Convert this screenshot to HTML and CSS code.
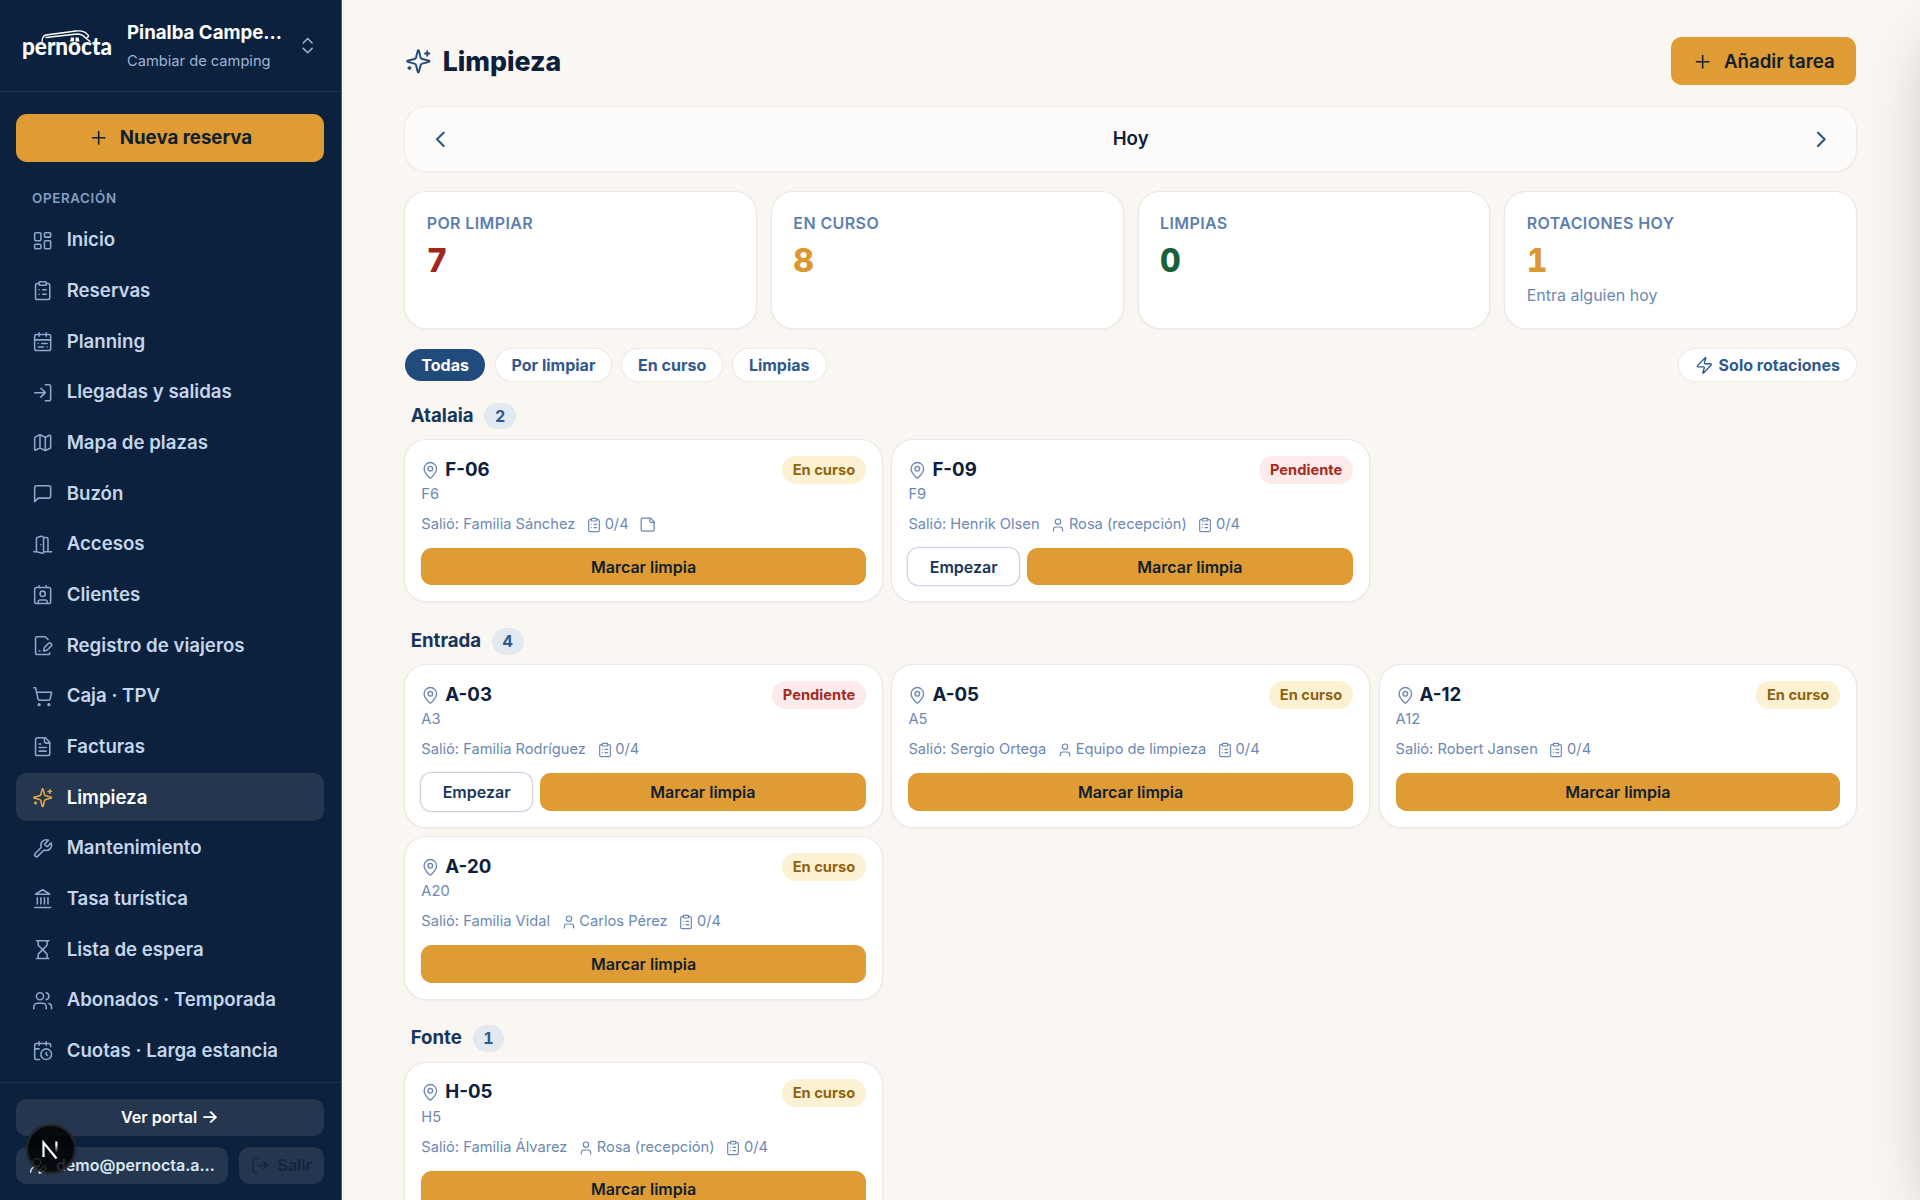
FILE: index.html
```html
<!DOCTYPE html>
<html lang="es">
<head>
    <meta charset="UTF-8">
    <meta name="viewport" content="width=device-width, initial-scale=1.0">
    <title>Limpieza · Pernocta</title>
    <link rel="stylesheet" href="styles.css">
</head>
<body>

<svg class="sprite" aria-hidden="true">
    <symbol id="i-plus" viewBox="0 0 24 24"><path d="M5 12h14M12 5v14"/></symbol>
    <symbol id="i-updown" viewBox="0 0 24 24"><path d="m7 15 5 5 5-5M7 9l5-5 5 5"/></symbol>
    <symbol id="i-left" viewBox="0 0 24 24"><path d="m15 18-6-6 6-6"/></symbol>
    <symbol id="i-right" viewBox="0 0 24 24"><path d="m9 18 6-6-6-6"/></symbol>
    <symbol id="i-dashboard" viewBox="0 0 24 24"><rect width="7" height="9" x="3" y="3" rx="1"/><rect width="7" height="5" x="14" y="3" rx="1"/><rect width="7" height="9" x="14" y="12" rx="1"/><rect width="7" height="5" x="3" y="16" rx="1"/></symbol>
    <symbol id="i-clipboard" viewBox="0 0 24 24"><rect width="8" height="4" x="8" y="2" rx="1"/><path d="M16 4h2a2 2 0 0 1 2 2v14a2 2 0 0 1-2 2H6a2 2 0 0 1-2-2V6a2 2 0 0 1 2-2h2M12 11h4M12 16h4M8 11h.01M8 16h.01"/></symbol>
    <symbol id="i-calendar" viewBox="0 0 24 24"><rect width="18" height="18" x="3" y="4" rx="2"/><path d="M16 2v4M3 10h18M8 2v4M17 14h-6M13 18H7M7 14h.01M17 18h.01"/></symbol>
    <symbol id="i-login" viewBox="0 0 24 24"><path d="M15 3h4a2 2 0 0 1 2 2v14a2 2 0 0 1-2 2h-4M10 17l5-5-5-5M15 12H3"/></symbol>
    <symbol id="i-map" viewBox="0 0 24 24"><path d="M14.106 5.553a2 2 0 0 0 1.788 0l3.659-1.83A1 1 0 0 1 21 4.619v12.764a1 1 0 0 1-.553.894l-4.553 2.277a2 2 0 0 1-1.788 0l-4.212-2.106a2 2 0 0 0-1.788 0l-3.659 1.83A1 1 0 0 1 3 19.381V6.618a1 1 0 0 1 .553-.894l4.553-2.277a2 2 0 0 1 1.788 0zM15 5.764v15M9 3.236v15"/></symbol>
    <symbol id="i-message" viewBox="0 0 24 24"><path d="M21 15a2 2 0 0 1-2 2H7l-4 4V5a2 2 0 0 1 2-2h14a2 2 0 0 1 2 2z"/></symbol>
    <symbol id="i-door" viewBox="0 0 24 24"><path d="M13 4h3a2 2 0 0 1 2 2v14M2 20h3M13 20h9M10 12v.01M13 4.562v16.157a1 1 0 0 1-1.242.97L5 20V5.562a2 2 0 0 1 1.515-1.94l4-1A2 2 0 0 1 13 4.561Z"/></symbol>
    <symbol id="i-contact" viewBox="0 0 24 24"><path d="M16 2v2M7 22v-2a2 2 0 0 1 2-2h6a2 2 0 0 1 2 2v2M8 2v2"/><circle cx="12" cy="11" r="3"/><rect x="3" y="4" width="18" height="18" rx="2"/></symbol>
    <symbol id="i-filepen" viewBox="0 0 24 24"><path d="m18 5-2.414-2.414A2 2 0 0 0 14.172 2H6a2 2 0 0 0-2 2v16a2 2 0 0 0 2 2h12a2 2 0 0 0 2-2"/><path d="M21.378 12.626a1 1 0 0 0-3.004-3.004l-4.01 4.012a2 2 0 0 0-.506.854l-.837 2.87a.5.5 0 0 0 .62.62l2.87-.837a2 2 0 0 0 .854-.506z"/><path d="M8 18h1"/></symbol>
    <symbol id="i-cart" viewBox="0 0 24 24"><circle cx="8" cy="21" r="1"/><circle cx="19" cy="21" r="1"/><path d="M2.05 2.05h2l2.66 12.42a2 2 0 0 0 2 1.58h9.78a2 2 0 0 0 1.95-1.57l1.65-7.43H5.12"/></symbol>
    <symbol id="i-file" viewBox="0 0 24 24"><path d="M15 2H6a2 2 0 0 0-2 2v16a2 2 0 0 0 2 2h12a2 2 0 0 0 2-2V7Z"/><path d="M14 2v4a2 2 0 0 0 2 2h4M10 9H8M16 13H8M16 17H8"/></symbol>
    <symbol id="i-sparkles" viewBox="0 0 24 24"><path d="M9.937 15.5A2 2 0 0 0 8.5 14.063l-6.135-1.582a.5.5 0 0 1 0-.962L8.5 9.936A2 2 0 0 0 9.937 8.5l1.582-6.135a.5.5 0 0 1 .963 0L14.063 8.5A2 2 0 0 0 15.5 9.937l6.135 1.581a.5.5 0 0 1 0 .964L15.5 14.063a2 2 0 0 0-1.437 1.437l-1.582 6.135a.5.5 0 0 1-.963 0z"/><path d="M20 3v4M22 5h-4M4 17v2M5 18H3"/></symbol>
    <symbol id="i-wrench" viewBox="0 0 24 24"><path d="M14.7 6.3a1 1 0 0 0 0 1.4l1.6 1.6a1 1 0 0 0 1.4 0l3.77-3.77a6 6 0 0 1-7.94 7.94l-6.91 6.91a2.12 2.12 0 0 1-3-3l6.91-6.91a6 6 0 0 1 7.94-7.94l-3.76 3.76z"/></symbol>
    <symbol id="i-landmark" viewBox="0 0 24 24"><path d="M3 22h18M6 18v-7M10 18v-7M14 18v-7M18 18v-7M12 2l8 5H4z"/></symbol>
    <symbol id="i-hourglass" viewBox="0 0 24 24"><path d="M5 22h14M5 2h14M17 22v-4.172a2 2 0 0 0-.586-1.414L12 12l-4.414 4.414A2 2 0 0 0 7 17.828V22M7 2v4.172a2 2 0 0 0 .586 1.414L12 12l4.414-4.414A2 2 0 0 0 17 6.172V2"/></symbol>
    <symbol id="i-users" viewBox="0 0 24 24"><path d="M16 21v-2a4 4 0 0 0-4-4H6a4 4 0 0 0-4 4v2M22 21v-2a4 4 0 0 0-3-3.870M16 3.130a4 4 0 0 1 0 7.750"/><circle cx="9" cy="7" r="4"/></symbol>
    <symbol id="i-calclock" viewBox="0 0 24 24"><path d="M21 7.5V6a2 2 0 0 0-2-2H5a2 2 0 0 0-2 2v14a2 2 0 0 0 2 2h3.500M16 2v4M8 2v4M3 10h5M17.5 17.5 16 16.3V14"/><circle cx="16" cy="16" r="6"/></symbol>
    <symbol id="i-userpen" viewBox="0 0 24 24"><path d="M2 21a8 8 0 0 1 10.821-7.487M21.378 16.626a1 1 0 0 0-3.004-3.004l-4.01 4.012a2 2 0 0 0-.506.854l-.837 2.87a.5.5 0 0 0 .62.62l2.87-.837a2 2 0 0 0 .854-.506z"/><circle cx="10" cy="8" r="5"/></symbol>
    <symbol id="i-logout" viewBox="0 0 24 24"><path d="M9 21H5a2 2 0 0 1-2-2V5a2 2 0 0 1 2-2h4M16 17l5-5-5-5M21 12H9"/></symbol>
    <symbol id="i-zap" viewBox="0 0 24 24"><path d="M4 14a1 1 0 0 1-.78-1.63l9.9-10.2a.5.5 0 0 1 .86.46l-1.92 6.02A1 1 0 0 0 13 10h7a1 1 0 0 1 .78 1.63l-9.9 10.2a.5.5 0 0 1-.86-.46l1.92-6.02A1 1 0 0 0 11 14z"/></symbol>
    <symbol id="i-pin" viewBox="0 0 24 24"><path d="M20 10c0 4.993-5.539 10.193-7.399 11.799a1 1 0 0 1-1.202 0C9.539 20.193 4 14.993 4 10a8 8 0 0 1 16 0"/><circle cx="12" cy="10" r="3"/></symbol>
    <symbol id="i-user" viewBox="0 0 24 24"><path d="M19 21v-2a4 4 0 0 0-4-4H9a4 4 0 0 0-4 4v2"/><circle cx="12" cy="7" r="4"/></symbol>
    <symbol id="i-note" viewBox="0 0 24 24"><path d="M16 3H5a2 2 0 0 0-2 2v14a2 2 0 0 0 2 2h14a2 2 0 0 0 2-2V8Z"/><path d="M15 3v4a2 2 0 0 0 2 2h4"/></symbol>
</svg>

<div class="app">
    <aside class="sidebar">
        <div class="brand">
            <svg class="logo" viewBox="0 0 94 36">
                <text x="0" y="27" textLength="90" lengthAdjust="spacingAndGlyphs">pernocta</text>
                <path d="M20 14.500c0-4 1-7 4-7.500L54 3c5-.5 9 0 12 4 1 1 0 2.500-1 2.500M24 9.500 55 6c4 0 6 1 8 3.500l5 4"/>
                <path class="windows" d="M49 9.500h3v4h-4zM53.500 9.500h3l1 4h-4z"/>
            </svg>
            <div class="brand-text">
                <div class="brand-name">Pinalba Campe…</div>
                <div class="brand-sub">Cambiar de camping</div>
            </div>
            <svg class="icon"><use href="#i-updown"/></svg>
        </div>

        <nav class="nav">
            <button class="btn btn-new"><svg class="icon"><use href="#i-plus"/></svg>Nueva reserva</button>
            <div class="nav-title">OPERACIÓN</div>
            <a class="nav-item"><svg class="icon"><use href="#i-dashboard"/></svg>Inicio</a>
            <a class="nav-item"><svg class="icon"><use href="#i-clipboard"/></svg>Reservas</a>
            <a class="nav-item"><svg class="icon"><use href="#i-calendar"/></svg>Planning</a>
            <a class="nav-item"><svg class="icon"><use href="#i-login"/></svg>Llegadas y salidas</a>
            <a class="nav-item"><svg class="icon"><use href="#i-map"/></svg>Mapa de plazas</a>
            <a class="nav-item"><svg class="icon"><use href="#i-message"/></svg>Buzón</a>
            <a class="nav-item"><svg class="icon"><use href="#i-door"/></svg>Accesos</a>
            <a class="nav-item"><svg class="icon"><use href="#i-contact"/></svg>Clientes</a>
            <a class="nav-item"><svg class="icon"><use href="#i-filepen"/></svg>Registro de viajeros</a>
            <a class="nav-item"><svg class="icon"><use href="#i-cart"/></svg>Caja · TPV</a>
            <a class="nav-item"><svg class="icon"><use href="#i-file"/></svg>Facturas</a>
            <a class="nav-item active"><svg class="icon"><use href="#i-sparkles"/></svg>Limpieza</a>
            <a class="nav-item"><svg class="icon"><use href="#i-wrench"/></svg>Mantenimiento</a>
            <a class="nav-item"><svg class="icon"><use href="#i-landmark"/></svg>Tasa turística</a>
            <a class="nav-item"><svg class="icon"><use href="#i-hourglass"/></svg>Lista de espera</a>
            <a class="nav-item"><svg class="icon"><use href="#i-users"/></svg>Abonados · Temporada</a>
            <a class="nav-item"><svg class="icon"><use href="#i-calclock"/></svg>Cuotas · Larga estancia</a>
        </nav>

        <div class="side-footer">
            <a class="side-btn portal">Ver portal <span class="arrow">→</span></a>
            <div class="side-row">
                <a class="side-btn account"><svg class="icon"><use href="#i-userpen"/></svg><span>demo@pernocta.a…</span></a>
                <a class="side-btn logout"><svg class="icon"><use href="#i-logout"/></svg>Salir</a>
            </div>
        </div>
    </aside>

    <main class="main">
        <header class="page-header">
            <h1><svg class="icon"><use href="#i-sparkles"/></svg>Limpieza</h1>
            <button class="btn"><svg class="icon"><use href="#i-plus"/></svg>Añadir tarea</button>
        </header>

        <div class="datebar">
            <svg class="icon"><use href="#i-left"/></svg>
            <span>Hoy</span>
            <svg class="icon"><use href="#i-right"/></svg>
        </div>

        <section class="stats">
            <div class="stat"><div class="stat-label">POR LIMPIAR</div><div class="stat-value red">7</div></div>
            <div class="stat"><div class="stat-label">EN CURSO</div><div class="stat-value amber">8</div></div>
            <div class="stat"><div class="stat-label">LIMPIAS</div><div class="stat-value green">0</div></div>
            <div class="stat"><div class="stat-label">ROTACIONES HOY</div><div class="stat-value amber">1</div><div class="stat-hint">Entra alguien hoy</div></div>
        </section>

        <div class="filters">
            <button class="chip selected">Todas</button>
            <button class="chip">Por limpiar</button>
            <button class="chip">En curso</button>
            <button class="chip">Limpias</button>
            <button class="chip rotations"><svg class="icon"><use href="#i-zap"/></svg>Solo rotaciones</button>
        </div>

        <section class="zone">
            <h2>Atalaia <span class="count">2</span></h2>
            <div class="cards">
                <article class="card">
                    <div class="card-top"><svg class="icon"><use href="#i-pin"/></svg><strong>F-06</strong><span class="badge progress">En curso</span></div>
                    <div class="card-code">F6</div>
                    <div class="meta"><span>Salió: Familia Sánchez</span><span><svg class="icon"><use href="#i-clipboard"/></svg>0/4</span><span><svg class="icon note"><use href="#i-note"/></svg></span></div>
                    <div class="actions"><button class="btn-done">Marcar limpia</button></div>
                </article>
                <article class="card">
                    <div class="card-top"><svg class="icon"><use href="#i-pin"/></svg><strong>F-09</strong><span class="badge pending">Pendiente</span></div>
                    <div class="card-code">F9</div>
                    <div class="meta"><span>Salió: Henrik Olsen</span><span><svg class="icon"><use href="#i-user"/></svg>Rosa (recepción)</span><span><svg class="icon"><use href="#i-clipboard"/></svg>0/4</span></div>
                    <div class="actions"><button class="btn-start">Empezar</button><button class="btn-done">Marcar limpia</button></div>
                </article>
            </div>
        </section>

        <section class="zone">
            <h2>Entrada <span class="count">4</span></h2>
            <div class="cards">
                <article class="card">
                    <div class="card-top"><svg class="icon"><use href="#i-pin"/></svg><strong>A-03</strong><span class="badge pending">Pendiente</span></div>
                    <div class="card-code">A3</div>
                    <div class="meta"><span>Salió: Familia Rodríguez</span><span><svg class="icon"><use href="#i-clipboard"/></svg>0/4</span></div>
                    <div class="actions"><button class="btn-start">Empezar</button><button class="btn-done">Marcar limpia</button></div>
                </article>
                <article class="card">
                    <div class="card-top"><svg class="icon"><use href="#i-pin"/></svg><strong>A-05</strong><span class="badge progress">En curso</span></div>
                    <div class="card-code">A5</div>
                    <div class="meta"><span>Salió: Sergio Ortega</span><span><svg class="icon"><use href="#i-user"/></svg>Equipo de limpieza</span><span><svg class="icon"><use href="#i-clipboard"/></svg>0/4</span></div>
                    <div class="actions"><button class="btn-done">Marcar limpia</button></div>
                </article>
                <article class="card">
                    <div class="card-top"><svg class="icon"><use href="#i-pin"/></svg><strong>A-12</strong><span class="badge progress">En curso</span></div>
                    <div class="card-code">A12</div>
                    <div class="meta"><span>Salió: Robert Jansen</span><span><svg class="icon"><use href="#i-clipboard"/></svg>0/4</span></div>
                    <div class="actions"><button class="btn-done">Marcar limpia</button></div>
                </article>
                <article class="card">
                    <div class="card-top"><svg class="icon"><use href="#i-pin"/></svg><strong>A-20</strong><span class="badge progress">En curso</span></div>
                    <div class="card-code">A20</div>
                    <div class="meta"><span>Salió: Familia Vidal</span><span><svg class="icon"><use href="#i-user"/></svg>Carlos Pérez</span><span><svg class="icon"><use href="#i-clipboard"/></svg>0/4</span></div>
                    <div class="actions"><button class="btn-done">Marcar limpia</button></div>
                </article>
            </div>
        </section>

        <section class="zone">
            <h2>Fonte <span class="count">1</span></h2>
            <div class="cards">
                <article class="card">
                    <div class="card-top"><svg class="icon"><use href="#i-pin"/></svg><strong>H-05</strong><span class="badge progress">En curso</span></div>
                    <div class="card-code">H5</div>
                    <div class="meta"><span>Salió: Familia Álvarez</span><span><svg class="icon"><use href="#i-user"/></svg>Rosa (recepción)</span><span><svg class="icon"><use href="#i-clipboard"/></svg>0/4</span></div>
                    <div class="actions"><button class="btn-done">Marcar limpia</button></div>
                </article>
            </div>
        </section>
    </main>

    <!-- closed drawer, only its shadow shows -->
    <div class="drawer"></div>

    <div class="dev-badge">
        <svg viewBox="0 0 48 48">
            <defs>
                <linearGradient id="fade" x1="0" y1="0" x2="0" y2="1"><stop offset="0.3" stop-color="#fff"/><stop offset="1" stop-color="#fff" stop-opacity="0"/></linearGradient>
            </defs>
            <path d="M16.500 32V17.500L29.500 33.500" stroke="#fff" stroke-width="2.200" fill="none"/>
            <rect x="28.300" y="16.500" width="2.200" height="11" fill="url(#fade)"/>
        </svg>
    </div>
</div>

</body>
</html>
```
FILE: styles.css
```css
* {
    box-sizing: border-box;
}
body {
    margin: 0;
    font-family: Inter, "Noto Sans", sans-serif;
    font-size: 16px;
    line-height: 1.3333;
    background: #faf7f2;
    color: #0c203b;
    overflow: hidden;
}
h1, h2 {
    margin: 0;
}
button {
    font-family: inherit;
    border: none;
    padding: 0;
}
.sprite {
    display: none;
}
.icon {
    width: 21.33px;
    height: 21.33px;
    flex-shrink: 0;
    fill: none;
    stroke: currentColor;
    stroke-width: 1.75;
    stroke-linecap: round;
    stroke-linejoin: round;
}
.app {
    display: flex;
    height: 1200px;
    position: relative;
    overflow: hidden;
}

/* Sidebar */
.sidebar {
    width: 342px;
    flex-shrink: 0;
    display: flex;
    flex-direction: column;
    background: #0c213d;
    border-right: 1px solid #4c607a;
    color: #c4d5ec;
}
.brand {
    display: flex;
    align-items: center;
    height: 91.5px;
    padding: 1px 22px 0;
    border-bottom: 1.33px solid #1d3350;
    color: #9cb5d6;
}
.logo {
    width: 94px;
    height: 36px;
    flex-shrink: 0;
    overflow: visible;
}
.logo text {
    font-family: Lato, sans-serif;
    font-size: 24px;
    font-weight: 900;
    fill: #fff;
}
.logo path {
    fill: none;
    stroke: #fff;
    stroke-width: 1.3;
    stroke-linecap: round;
}
.logo .windows {
    fill: #fff;
    stroke: none;
}
.brand-text {
    width: 158px;
    margin-left: 11px;
}
.brand-name {
    padding-top: 1px;
    font-size: 18.67px;
    line-height: 26px;
    font-weight: 700;
    color: #fff;
    white-space: nowrap;
}
.brand-sub {
    font-size: 14.67px;
    line-height: 22px;
    margin-top: 4px;
}
.brand > .icon {
    margin-left: 12px;
}
.nav {
    flex: 1;
    min-height: 0;
    overflow: hidden;
    padding: 22px 17px 0 16px;
    display: flex;
    flex-direction: column;
}
.btn {
    display: flex;
    align-items: center;
    justify-content: center;
    gap: 10.67px;
    height: 48px;
    flex-shrink: 0;
    padding: 0 21.33px;
    border-radius: 10.67px;
    background: #df9b34;
    color: #10202e;
    font-size: 18.67px;
    font-weight: 600;
}
.btn-new {
    font-weight: 700;
}
.nav-title {
    padding: 0 16px;
    margin: 26px 0 7.33px;
    font-size: 13.33px;
    line-height: 21.33px;
    font-weight: 600;
    letter-spacing: 0.67px;
    color: #84a0c4;
}
.nav-item {
    display: flex;
    align-items: center;
    gap: 13.33px;
    height: 48px;
    flex-shrink: 0;
    margin-bottom: 2.67px;
    padding: 1.5px 16px 0;
    border-radius: 10.67px;
    font-size: 18.67px;
    font-weight: 600;
}
.nav-item .icon {
    margin-top: -1px;
    color: #8ba8cd;
}
.nav-item.active {
    background: #24374f;
    color: #fff;
}
.nav-item.active .icon {
    color: #e3a548;
}
.side-footer {
    border-top: 1.33px solid #1d3350;
    padding: 16px 17px 16px 16px;
    display: flex;
    flex-direction: column;
    gap: 10.67px;
}
.side-row {
    display: flex;
    gap: 10.67px;
}
.side-btn {
    display: flex;
    align-items: center;
    justify-content: center;
    gap: 8px;
    height: 37.33px;
    border-radius: 10.67px;
    background: #24374f;
    color: #fff;
    font-weight: 600;
}
.portal {
    gap: 4px;
}
.arrow {
    font-size: 18.67px;
    font-weight: 500;
}
.account {
    width: 212px;
    color: #dbe6f5;
}
.side-row .icon {
    width: 18.67px;
    height: 18.67px;
}
.logout {
    flex: 1;
    color: #13253d;
}

/* Main */
.main {
    flex: 1;
    min-width: 0;
    padding: 37.33px 64px 0 63.33px;
}
.page-header {
    display: flex;
    align-items: center;
    justify-content: space-between;
    height: 48px;
}
.page-header h1 {
    display: flex;
    align-items: center;
    gap: 10.67px;
    font-size: 26.67px;
    font-weight: 800;
}
.page-header h1 .icon {
    width: 26.67px;
    height: 26.67px;
    color: #234b7c;
}
.datebar {
    display: flex;
    align-items: center;
    justify-content: space-between;
    height: 64px;
    margin-top: 21.33px;
    padding: 1px 21.33px 0;
    border-radius: 21.33px;
    background: #fdfcfa;
    box-shadow: 0 0 0 1.33px #efece7, 0 1px 3px rgba(12, 32, 59, 0.05);
    font-size: 18.67px;
    font-weight: 600;
}
.datebar .icon {
    width: 26.67px;
    height: 26.67px;
    stroke-width: 2;
    color: #31598c;
}
.stats {
    display: grid;
    grid-template-columns: repeat(4, 1fr);
    gap: 16px;
    margin-top: 21.33px;
}
.stat {
    height: 136px;
    padding: 21.33px;
    border-radius: 21.33px;
    background: #fff;
    box-shadow: 0 0 0 1.33px #edeae5, 0 1px 3px rgba(12, 32, 59, 0.08);
}
.stat-label {
    font-weight: 600;
    letter-spacing: 0.4px;
    color: #5d7fae;
}
.stat-value {
    margin-top: 5.33px;
    font-size: 32px;
    line-height: 42.67px;
    font-weight: 800;
    font-variant-numeric: tabular-nums;
}
.red {
    color: #a3261c;
}
.amber {
    color: #db9832;
}
.green {
    color: #17603a;
}
.stat-hint {
    margin-top: 2.67px;
    color: #6c88b3;
}
.filters {
    display: flex;
    gap: 10.67px;
    margin-top: 21.33px;
}
.chip {
    display: flex;
    align-items: center;
    gap: 5.33px;
    height: 32px;
    padding: 0 16px;
    border-radius: 16px;
    background: #fff;
    box-shadow: 0 0 0 1.33px #efece7;
    color: #31598c;
    font-size: 16px;
    font-weight: 700;
}
.chip.selected {
    background: #214b7c;
    box-shadow: none;
    color: #fff;
}
.chip .icon {
    width: 18.67px;
    height: 18.67px;
}
.rotations {
    margin-left: auto;
}
.zone {
    margin-top: 26.67px;
}
.filters + .zone {
    margin-top: 21.33px;
}
.zone h2 {
    display: flex;
    align-items: center;
    gap: 10.67px;
    height: 26.67px;
    padding-left: 5.33px;
    font-size: 18.67px;
    line-height: 26.67px;
    font-weight: 700;
    color: #17355c;
}
.count {
    padding: 0 10.67px;
    border-radius: 13.33px;
    background: #e3e9f0;
    color: #31598c;
    font-size: 16px;
    line-height: 26.67px;
    font-variant-numeric: tabular-nums;
}
.cards {
    display: grid;
    grid-template-columns: repeat(3, 1fr);
    gap: 10.67px;
    margin-top: 10.67px;
}
.card {
    height: 161.33px;
    padding: 16px;
    border-radius: 21.33px;
    background: #fff;
    box-shadow: 0 0 0 1.33px #edeae5, 0 1px 3px rgba(12, 32, 59, 0.08);
}
.card-top {
    display: flex;
    align-items: center;
    gap: 5.33px;
    height: 28px;
}
.card-top .icon {
    width: 18.67px;
    height: 18.67px;
    color: #6c88b3;
}
.card-top strong {
    font-size: 18.67px;
    font-weight: 700;
}
.badge {
    margin-left: auto;
    padding: 0 10.67px;
    border-radius: 14px;
    font-size: 14.67px;
    line-height: 28px;
    font-weight: 700;
}
.progress {
    background: #fdf1d3;
    color: #8f6310;
}
.pending {
    background: #fdeaea;
    color: #a52a22;
}
.card-code {
    font-size: 14.67px;
    line-height: 20px;
    color: #6c88b3;
}
.meta {
    display: flex;
    align-items: center;
    gap: 10.67px;
    height: 20px;
    margin-top: 11px;
    font-size: 14.67px;
    color: #6c88b3;
}
.meta span {
    display: flex;
    align-items: center;
    gap: 2.67px;
}
.meta .icon {
    width: 16px;
    height: 16px;
}
.meta .note {
    width: 17.33px;
    height: 17.33px;
}
.actions {
    display: flex;
    gap: 8px;
    margin-top: 13px;
}
.btn-done, .btn-start {
    height: 37.33px;
    border-radius: 10.67px;
    font-size: 16px;
    font-weight: 600;
}
.btn-done {
    flex: 1;
    background: #df9b34;
    color: #10202e;
}
.btn-start {
    padding: 0 21.33px;
    background: #fff;
    box-shadow: 0 0 0 1.33px #cdd7e3;
    color: #17355c;
}

/* Overlays */
.drawer {
    position: absolute;
    top: 0;
    left: 100%;
    width: 600px;
    height: 1184px;
    box-shadow: 0 33px 60px -14px rgba(0, 0, 0, 0.25);
}
.dev-badge {
    position: absolute;
    left: 27px;
    top: 1125px;
    width: 48px;
    height: 48px;
    border-radius: 50%;
    background: rgba(0, 0, 0, 0.82);
    box-shadow: 0 0 0 1.33px #23272c, inset 0 0 0 1px #2a2a2a;
}
```
